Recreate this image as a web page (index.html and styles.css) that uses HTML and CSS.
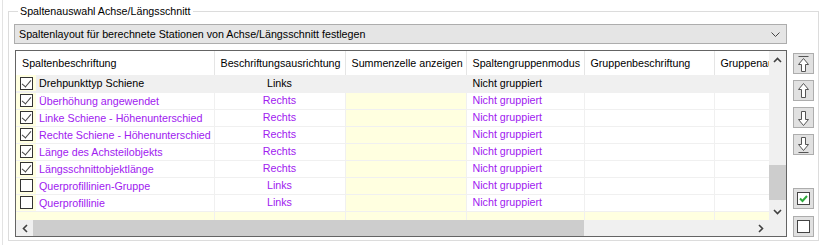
FILE: index.html
```html
<!DOCTYPE html>
<html>
<head>
<meta charset="utf-8">
<link rel="stylesheet" href="styles.css">
</head>
<body>
<div class="panel">
  <fieldset class="group">
    <legend class="group-title">Spaltenauswahl Achse/Längsschnitt</legend>
    <div class="layout">
      <div class="main">
        <div class="combo">
          <span class="combo-text">Spaltenlayout für berechnete Stationen von Achse/Längsschnitt festlegen</span>
          <svg class="combo-arrow" width="9" height="5" viewBox="0 0 9 5"><path d="M0.5 0.5 L4.5 4.5 L8.5 0.5" fill="none" stroke="#444" stroke-width="1"/></svg>
        </div>
        <div class="datagrid">
          <div class="viewport">
            <table class="tbl">
              <colgroup>
                <col class="c1"><col class="c2"><col class="c3"><col class="c4"><col class="c5"><col class="c6">
              </colgroup>
              <thead>
                <tr>
                  <th>Spaltenbeschriftung</th>
                  <th>Beschriftungsausrichtung</th>
                  <th>Summenzelle anzeigen</th>
                  <th>Spaltengruppenmodus</th>
                  <th>Gruppenbeschriftung</th>
                  <th>Gruppenausrichtung</th>
                </tr>
              </thead>
              <tbody>
                <tr class="sel">
                  <td class="name"><span class="chkcell"><span class="chk on"></span></span><span class="lbl">Drehpunkttyp Schiene</span></td>
                  <td class="ctr">Links</td><td></td><td>Nicht gruppiert</td><td></td><td></td>
                </tr>
                <tr class="mod">
                  <td class="name"><span class="chkcell"><span class="chk on"></span></span><span class="lbl">Überhöhung angewendet</span></td>
                  <td class="ctr">Rechts</td><td class="sum"></td><td>Nicht gruppiert</td><td></td><td></td>
                </tr>
                <tr class="mod">
                  <td class="name"><span class="chkcell"><span class="chk on"></span></span><span class="lbl">Linke Schiene - Höhenunterschied</span></td>
                  <td class="ctr">Rechts</td><td class="sum"></td><td>Nicht gruppiert</td><td></td><td></td>
                </tr>
                <tr class="mod">
                  <td class="name"><span class="chkcell"><span class="chk on"></span></span><span class="lbl">Rechte Schiene - Höhenunterschied</span></td>
                  <td class="ctr">Rechts</td><td class="sum"></td><td>Nicht gruppiert</td><td></td><td></td>
                </tr>
                <tr class="mod">
                  <td class="name"><span class="chkcell"><span class="chk on"></span></span><span class="lbl">Länge des Achsteilobjekts</span></td>
                  <td class="ctr">Rechts</td><td class="sum"></td><td>Nicht gruppiert</td><td></td><td></td>
                </tr>
                <tr class="mod">
                  <td class="name"><span class="chkcell"><span class="chk on"></span></span><span class="lbl">Längsschnittobjektlänge</span></td>
                  <td class="ctr">Rechts</td><td class="sum"></td><td>Nicht gruppiert</td><td></td><td></td>
                </tr>
                <tr class="mod">
                  <td class="name"><span class="chkcell"><span class="chk"></span></span><span class="lbl">Querprofillinien-Gruppe</span></td>
                  <td class="ctr">Links</td><td class="sum"></td><td>Nicht gruppiert</td><td></td><td></td>
                </tr>
                <tr class="mod">
                  <td class="name"><span class="chkcell"><span class="chk"></span></span><span class="lbl">Querprofillinie</span></td>
                  <td class="ctr">Links</td><td class="sum"></td><td>Nicht gruppiert</td><td></td><td></td>
                </tr>
                <tr class="empty">
                  <td></td><td></td><td></td><td></td><td></td><td></td>
                </tr>
              </tbody>
            </table>
          </div>
          <div class="vscroll">
            <svg class="sarrow" width="9" height="6" viewBox="0 0 9 6"><path d="M1 5 L4.5 1.5 L8 5" fill="none" stroke="#404040" stroke-width="1.6"/></svg>
            <div class="vtrack"><div class="vthumb"></div></div>
            <svg class="sarrow" width="9" height="6" viewBox="0 0 9 6"><path d="M1 1 L4.5 4.5 L8 1" fill="none" stroke="#404040" stroke-width="1.6"/></svg>
          </div>
          <div class="hscroll">
            <svg class="sarrow" width="6" height="9" viewBox="0 0 6 9"><path d="M5 1 L1.5 4.5 L5 8" fill="none" stroke="#404040" stroke-width="1.6"/></svg>
            <div class="htrack"><div class="hthumb"></div></div>
            <svg class="sarrow" width="6" height="9" viewBox="0 0 6 9"><path d="M1 1 L4.5 4.5 L1 8" fill="none" stroke="#404040" stroke-width="1.6"/></svg>
          </div>
          <div class="corner"></div>
        </div>
      </div>
      <div class="side">
        <div class="btn-group">
          <button class="btn" type="button">
            <svg width="13" height="16" viewBox="0 0 13 16"><path d="M1.5 0.5 H11.5" stroke="#555" stroke-width="1"/><path d="M6.5 2.5 L1.5 8.5 H4.5 V15.5 H8.5 V8.5 H11.5 Z" fill="#fff" stroke="#555" stroke-width="1"/></svg>
          </button>
          <button class="btn" type="button">
            <svg width="13" height="16" viewBox="0 0 13 16"><path d="M6.5 0.5 L1.5 6.5 H4.5 V14.5 H8.5 V6.5 H11.5 Z" fill="#fff" stroke="#555" stroke-width="1"/></svg>
          </button>
          <button class="btn" type="button">
            <svg width="13" height="16" viewBox="0 0 13 16"><path d="M6.5 15.5 L1.5 9.5 H4.5 V1.5 H8.5 V9.5 H11.5 Z" fill="#fff" stroke="#555" stroke-width="1"/></svg>
          </button>
          <button class="btn" type="button">
            <svg width="13" height="16" viewBox="0 0 13 16"><path d="M6.5 13.5 L1.5 7.5 H4.5 V0.5 H8.5 V7.5 H11.5 Z" fill="#fff" stroke="#555" stroke-width="1"/><path d="M1.5 15.5 H11.5" stroke="#555" stroke-width="1"/></svg>
          </button>
        </div>
        <div class="btn-group">
          <button class="btn" type="button">
            <svg width="13" height="13" viewBox="0 0 13 13"><rect x="0.5" y="0.5" width="12" height="12" fill="#fff" stroke="#444"/><path d="M3 6.5 L5.5 9 L10 4" fill="none" stroke="#2eaa3c" stroke-width="2"/></svg>
          </button>
          <button class="btn" type="button">
            <svg width="13" height="13" viewBox="0 0 13 13"><rect x="0.5" y="0.5" width="12" height="12" fill="#fff" stroke="#444"/></svg>
          </button>
        </div>
      </div>
    </div>
  </fieldset>
</div>
</body>
</html>
```

FILE: styles.css
```css
* { box-sizing: border-box; }

html, body {
  margin: 0;
  padding: 0;
  background: #ffffff;
}

body {
  font-family: "Liberation Sans", Arial, sans-serif;
  font-size: 10.7px;
  color: #000;
  width: 824px;
  height: 245px;
  overflow: hidden;
}

.panel {
  margin-left: 2px;
  border-left: 1px solid #e3e3e3;
  height: 245px;
  padding: 4px 5px 0 5px;
}

.group {
  margin: 0;
  width: 811px;
  height: 237px;
  border: 1px solid #dcdcdc;
  padding: 6px 3px 3px 5px;
  min-width: 0;
}

.group-title {
  padding: 0 2px 0 2px;
  margin-left: 4px;
  font-size: 10.7px;
  line-height: 14px;
  color: #000;
}

.layout {
  display: flex;
  gap: 6px;
  height: 100%;
}

.main {
  width: 773px;
  display: flex;
  flex-direction: column;
  gap: 6px;
}

.combo {
  height: 20px;
  background: #e5e5e5;
  border: 1px solid #adadad;
  display: flex;
  align-items: center;
  justify-content: space-between;
  padding: 0 6px 0 4px;
  font-size: 10.7px;
}

.combo-arrow { display: block; }

.datagrid {
  margin-left: 1px;
  flex: 1;
  border: 1px solid #646464;
  display: grid;
  grid-template-columns: 1fr 17px;
  grid-template-rows: 1fr 16px;
  min-height: 0;
  background: #fff;
}

.viewport {
  overflow: hidden;
  background: #fff;
}

.tbl {
  border-collapse: collapse;
  table-layout: fixed;
  width: 754px;
  font-size: 10.7px;
}

.c1 { width: 198px; }
.c2 { width: 131px; }
.c3 { width: 121px; }
.c4 { width: 118px; }
.c5 { width: 130px; }
.c6 { width: 56px; }

.tbl th {
  height: 24px;
  font-weight: normal;
  text-align: left;
  padding: 0 0 0 6px;
  white-space: nowrap;
  overflow: hidden;
  border-right: 1px solid #e5e5e5;
  background: #fff;
}

.tbl td {
  height: 17px;
  padding: 0 0 0 6px;
  white-space: nowrap;
  overflow: hidden;
  border-right: 1px solid #f0f0f0;
  border-bottom: 1px solid #f0f0f0;
  line-height: 15px;
}

.tbl td.ctr {
  text-align: center;
  padding: 0;
}

.tbl td.name {
  padding: 0;
}

.chkcell {
  display: inline-flex;
  align-items: center;
  justify-content: center;
  width: 20px;
  height: 16px;
  background: #ffffe0;
  vertical-align: top;
  padding-left: 1px;
}

.chk {
  display: block;
  width: 13px;
  height: 13px;
  border: 1px solid #333;
  background: #fff;
  position: relative;
}

.chk.on::after {
  content: "";
  position: absolute;
  left: 3px;
  top: 0px;
  width: 4px;
  height: 8px;
  border-right: 1.5px solid #444;
  border-bottom: 1.5px solid #444;
  transform: rotate(40deg);
}

.lbl {
  display: inline-block;
  padding-left: 3px;
  vertical-align: top;
  line-height: 16px;
}

.sel td {
  background: #f0f0f0;
  color: #000;
}

.mod td {
  color: #a020f0;
}

.mod td.sum {
  background: #ffffe0;
}

.empty td {
  height: 9px;
  background: #ffffe0;
  border-bottom: none;
}

.vscroll {
  background: #f0f0f0;
  display: flex;
  flex-direction: column;
  align-items: center;
}

.vscroll .sarrow {
  margin: 6px 0 5px;
}

.vtrack {
  flex: 1;
  width: 100%;
  position: relative;
}

.vthumb {
  position: absolute;
  left: 0;
  right: 0;
  top: 97px;
  height: 35px;
  background: #cdcdcd;
}

.hscroll {
  background: #f0f0f0;
  display: flex;
  align-items: center;
}

.hscroll .sarrow {
  margin: 0 5px 0 6px;
}

.htrack {
  flex: 1;
  height: 100%;
  position: relative;
}

.hthumb {
  position: absolute;
  top: 0;
  bottom: 0;
  left: 0;
  width: 551px;
  background: #cdcdcd;
}

.corner {
  background: #f0f0f0;
}

.side {
  display: flex;
  flex-direction: column;
  justify-content: space-between;
  padding-top: 29px;
}

.btn-group {
  display: flex;
  flex-direction: column;
  gap: 6px;
}

.btn-group + .btn-group {
  gap: 7px;
}

.btn {
  width: 21px;
  height: 21px;
  margin: 0;
  padding: 0;
  background: #e1e1e1;
  border: 1px solid #adadad;
  display: flex;
  align-items: center;
  justify-content: center;
}

.btn svg { display: block; }
```
